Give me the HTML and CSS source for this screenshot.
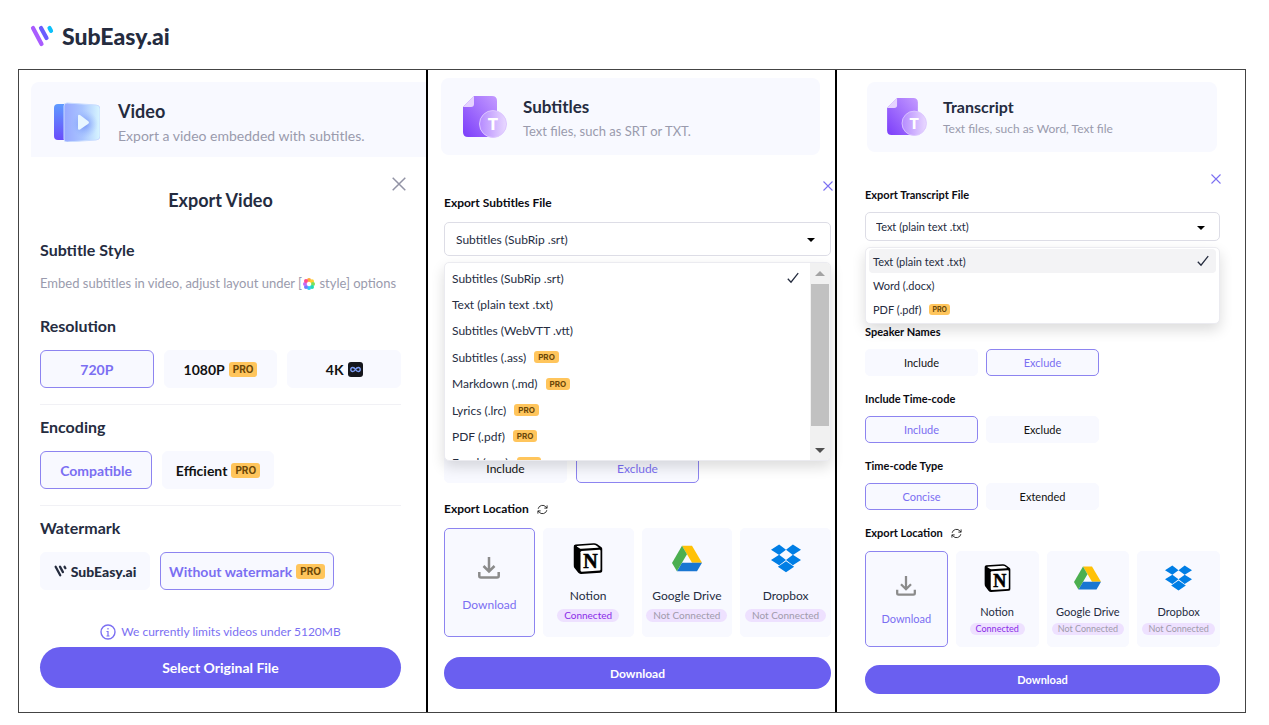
FILE: index.html
```html
<!DOCTYPE html>
<html lang="en">
<head>
    <meta charset="utf-8">
    <title>SubEasy.ai Export</title>
    <link rel="stylesheet" href="styles.css">
</head>
<body>
    <!-- Shared icons -->
    <svg class="sprite" aria-hidden="true">
        <defs>
            <linearGradient id="docFill" x1="1" y1="0" x2="0" y2="1">
                <stop offset="0" stop-color="#c49bff"/>
                <stop offset="1" stop-color="#7b3dfa"/>
            </linearGradient>
            <linearGradient id="discFill" x1="0" y1="0" x2="1" y2="0">
                <stop offset="0" stop-color="#b58aff"/>
                <stop offset="1" stop-color="#e9d9ff"/>
            </linearGradient>
            <linearGradient id="spineFill" x1="0" y1="0" x2="0" y2="1">
                <stop offset="0" stop-color="#5f9bff"/>
                <stop offset="1" stop-color="#6a4cfb"/>
            </linearGradient>
            <linearGradient id="frameFill" x1="0" y1="0" x2="1" y2="0">
                <stop offset="0" stop-color="#98a8ff"/>
                <stop offset="0.5" stop-color="#a9c4ff"/>
                <stop offset="1" stop-color="#d8f6ff"/>
            </linearGradient>
            <radialGradient id="playGlow">
                <stop offset="0" stop-color="#6f8ff5"/>
                <stop offset="1" stop-color="#9fbcff" stop-opacity="0"/>
            </radialGradient>
        </defs>
        <symbol id="close" viewBox="0 0 14 14">
            <path d="M.7 .7L13.3 13.3M13.3 .7L.7 13.3" fill="none" stroke="currentColor" stroke-width="1.5"/>
        </symbol>
        <symbol id="check" viewBox="0 0 12 12">
            <path d="M.8 6.8L4 10.2L11.2 1.2" fill="none" stroke="currentColor" stroke-width="1.3"/>
        </symbol>
        <symbol id="mark" viewBox="0 0 24 22">
            <g fill="none" stroke-width="4.2" stroke-linecap="round">
                <path class="mark-a" d="M3 3L11.5 19"/>
                <path class="mark-b" d="M11 3L16.5 13"/>
                <path class="mark-c" d="M19.5 3L21 5.8"/>
            </g>
        </symbol>
        <symbol id="doc" viewBox="0 0 44 42">
            <path d="M11 0H29Q34 0 34 5V41H5Q0 41 0 36V11Z" fill="url(#docFill)"/>
            <path d="M11 0V8Q11 11 8 11H0Z" fill="#e6d3ff"/>
            <circle cx="30" cy="28" r="13.5" fill="url(#discFill)" stroke="#dcc6ff"/>
        </symbol>
        <symbol id="refresh" viewBox="0 0 24 24">
            <path d="M2.5 10.5A9.7 9.7 0 0 1 19.5 6.5L22 9M22 3V9H16M21.5 13.5A9.7 9.7 0 0 1 4.5 17.5L2 15M2 21V15H8" fill="none" stroke="#222" stroke-width="2"/>
        </symbol>
        <symbol id="tray" viewBox="0 0 22 22">
            <path d="M11 0V14M5.5 9L11 14.5L16.5 9M1.3 15V19Q1.3 20.5 3 20.5H19Q20.7 20.5 20.7 19V15" fill="none" stroke="#8b8b8b" stroke-width="2.5"/>
        </symbol>
        <symbol id="notion" viewBox="0 0 29 31">
            <path d="M2 1.5L20 .2Q22 0 23.5 1L28 4.3Q29 5 29 6.5V27.5Q29 29.5 27 29.7L7.5 30.9Q5.8 31 4.8 29.8L1 25Q0 23.8 0 22V4Q0 1.7 2 1.5Z"/>
            <path d="M3.5 3L20.5 1.8Q21.5 1.8 22.3 2.3L25 4.2Q25.3 4.7 24.5 4.7L8 5.8Q6.8 5.9 6 5.3L3.3 3.5Z" fill="#fff"/>
            <path d="M8.2 7.9L26 6.8Q27 6.8 27 7.9V26.5Q27 27.5 26 27.6L8.2 28.7Q7 28.7 7 27.6V9.2Q7 8 8.2 7.9Z" fill="#fff"/>
        </symbol>
        <symbol id="drive" viewBox="3 6 42 36">
            <path d="M17 6L31 6 45 30 31 30z" fill="#ffc107"/>
            <path d="M9.875 42L16.938 30 45 30 38 42z" fill="#1976d2"/>
            <path d="M3 30.125L9.875 42 24 18 17 6z" fill="#4caf50"/>
        </symbol>
        <symbol id="dropbox" viewBox="0 2 24 22">
            <path d="M6.5 1.8L0 6L6.5 10.2L12 6ZM17.5 1.8L12 6L17.5 10.2L24 6ZM6.5 10L0 14.2L6.5 18.4L12 14.2ZM17.5 10L12 14.2L17.5 18.4L24 14.2ZM5.5 19.6L12 15.2L18.5 19.6L12 24Z" fill="#007ee5"/>
        </symbol>
    </svg>

    <header class="brand">
        <svg class="brand-mark"><use href="#mark"/></svg>
        <span>SubEasy.ai</span>
    </header>

    <main class="panels">
        <!-- Video -->
        <section class="panel panel-video">
            <div class="card">
                <svg class="card-icon" viewBox="0 0 46 40">
                    <rect x="0" y="2" width="14" height="36" rx="4" fill="url(#spineFill)"/>
                    <path d="M13 1L42 3Q46 3 46 7V34Q46 38 42 38L13 40Q10 40 10 37V4Q10 1 13 1Z" fill="url(#frameFill)" stroke="#c9dcff"/>
                    <circle cx="30" cy="22" r="14" fill="url(#playGlow)"/>
                    <path d="M24 14Q24 12 26 13L34 19Q36 20.5 34 22L26 27.5Q24 28.5 24 26.5Z" fill="#e8f6ff"/>
                </svg>
                <div>
                    <h2 class="card-title">Video</h2>
                    <p class="card-text">Export a video embedded with subtitles.</p>
                </div>
            </div>
            <div class="dialog">
                <button class="close" type="button" aria-label="Close"><svg><use href="#close"/></svg></button>
                <h2 class="dialog-title">Export Video</h2>

                <div class="group first">
                    <h3>Subtitle Style</h3>
                    <p class="hint">Embed subtitles in video, adjust layout under [<svg class="flower" viewBox="0 0 12 12">
                        <circle cx="6" cy="2" r="2" fill="#ffa63d"/><circle cx="9" cy="3.2" r="2" fill="#ffd02e"/>
                        <circle cx="10" cy="6" r="2" fill="#7be05c"/><circle cx="9" cy="9" r="2" fill="#23dcb4"/>
                        <circle cx="6" cy="10" r="2" fill="#2fcaf5"/><circle cx="3" cy="9" r="2" fill="#6d7cff"/>
                        <circle cx="2" cy="6" r="2" fill="#c468f2"/><circle cx="3" cy="3" r="2" fill="#ff4b8b"/>
                        <circle cx="6" cy="6" r="1.3" fill="#fff"/>
                    </svg> style] options</p>
                </div>

                <div class="group">
                    <h3>Resolution</h3>
                    <div class="options thirds">
                        <button class="option selected" type="button">720P</button>
                        <button class="option" type="button">1080P <span class="pro">PRO</span></button>
                        <button class="option" type="button">4K <svg class="infinity" viewBox="0 0 15 15">
                            <rect width="15" height="15" rx="3" fill="#15161c"/>
                            <path d="M7.5 7.5C6 5 2.8 4.8 2.8 7.5S6 10 7.5 7.5S12.2 4.8 12.2 7.5S9 10 7.5 7.5" fill="none" stroke="#7d9df5" stroke-width="1.4"/>
                        </svg></button>
                    </div>
                </div>

                <div class="group">
                    <h3>Encoding</h3>
                    <div class="options">
                        <button class="option selected" type="button">Compatible</button>
                        <button class="option" type="button">Efficient <span class="pro">PRO</span></button>
                    </div>
                </div>

                <div class="group last">
                    <h3>Watermark</h3>
                    <div class="options">
                        <button class="option logo-option" type="button"><svg class="mono-mark"><use href="#mark"/></svg>SubEasy.ai</button>
                        <button class="option wide selected" type="button">Without watermark <span class="pro">PRO</span></button>
                    </div>
                </div>

                <p class="limit">
                    <svg viewBox="0 0 16 16"><circle cx="8" cy="8" r="7" fill="none" stroke="currentColor" stroke-width="1.4"/><path d="M8 7V12M6.5 7.5H8M6.5 12H9.5M8 4V5.5" fill="none" stroke="currentColor" stroke-width="1.2"/></svg>
                    We currently limits videos under 5120MB
                </p>
                <button class="submit" type="button">Select Original File</button>
            </div>
        </section>

        <!-- Subtitles -->
        <section class="panel panel-subtitles">
            <div class="card">
                <svg class="card-icon" viewBox="0 0 44 42"><use href="#doc" width="44" height="42"/><text x="30" y="34">T</text></svg>
                <div>
                    <h2 class="card-title">Subtitles</h2>
                    <p class="card-text">Text files, such as SRT or TXT.</p>
                </div>
            </div>
            <div class="dialog">
                <button class="close" type="button" aria-label="Close"><svg><use href="#close"/></svg></button>
                <h3><label for="subtitleFormat">Export Subtitles File</label></h3>
                <div class="picker">
                    <select id="subtitleFormat">
                        <option>Subtitles (SubRip .srt)</option>
                    </select>
                    <div class="menu">
                        <ul>
                            <li>Subtitles (SubRip .srt)<svg class="check"><use href="#check"/></svg></li>
                            <li>Text (plain text .txt)</li>
                            <li>Subtitles (WebVTT .vtt)</li>
                            <li>Subtitles (.ass) <span class="pro">PRO</span></li>
                            <li>Markdown (.md) <span class="pro">PRO</span></li>
                            <li>Lyrics (.lrc) <span class="pro">PRO</span></li>
                            <li>PDF (.pdf) <span class="pro">PRO</span></li>
                            <li>Excel (.csv) <span class="pro">PRO</span></li>
                        </ul>
                        <div class="scrollbar">
                            <svg viewBox="0 0 10 5"><path d="M0 5L5 0L10 5Z" fill="#a3a3a3"/></svg>
                            <div class="thumb"></div>
                            <svg viewBox="0 0 10 5"><path d="M0 0L5 5L10 0Z" fill="#505050"/></svg>
                        </div>
                    </div>
                </div>
                <div class="options under-menu">
                    <button class="option" type="button">Include</button>
                    <button class="option selected" type="button">Exclude</button>
                </div>

                <h3>Export Location <svg class="refresh"><use href="#refresh"/></svg></h3>
                <div class="tiles">
                    <button class="tile selected" type="button"><svg class="tray"><use href="#tray"/></svg>Download</button>
                    <button class="tile" type="button"><svg class="app notion" viewBox="0 0 29 31"><use href="#notion" width="29" height="31"/><text x="17" y="25">N</text></svg>Notion<span class="status on">Connected</span></button>
                    <button class="tile" type="button"><svg class="app"><use href="#drive"/></svg>Google Drive<span class="status">Not Connected</span></button>
                    <button class="tile" type="button"><svg class="app"><use href="#dropbox"/></svg>Dropbox<span class="status">Not Connected</span></button>
                </div>
                <button class="submit" type="button">Download</button>
            </div>
        </section>

        <!-- Transcript -->
        <section class="panel panel-transcript">
            <div class="card">
                <svg class="card-icon" viewBox="0 0 44 42"><use href="#doc" width="44" height="42"/><text x="30" y="34">T</text></svg>
                <div>
                    <h2 class="card-title">Transcript</h2>
                    <p class="card-text">Text files, such as Word, Text file</p>
                </div>
            </div>
            <div class="dialog">
                <button class="close" type="button" aria-label="Close"><svg><use href="#close"/></svg></button>
                <h3><label for="transcriptFormat">Export Transcript File</label></h3>
                <div class="picker">
                    <select id="transcriptFormat">
                        <option>Text (plain text .txt)</option>
                    </select>
                    <div class="menu">
                        <ul>
                            <li class="current">Text (plain text .txt)<svg class="check"><use href="#check"/></svg></li>
                            <li>Word (.docx)</li>
                            <li>PDF (.pdf) <span class="pro">PRO</span></li>
                        </ul>
                    </div>
                </div>

                <h3 class="under-menu">Speaker Names</h3>
                <div class="options">
                    <button class="option" type="button">Include</button>
                    <button class="option selected" type="button">Exclude</button>
                </div>
                <h3>Include Time-code</h3>
                <div class="options">
                    <button class="option selected" type="button">Include</button>
                    <button class="option" type="button">Exclude</button>
                </div>
                <h3>Time-code Type</h3>
                <div class="options">
                    <button class="option selected" type="button">Concise</button>
                    <button class="option" type="button">Extended</button>
                </div>

                <h3>Export Location <svg class="refresh"><use href="#refresh"/></svg></h3>
                <div class="tiles">
                    <button class="tile selected" type="button"><svg class="tray"><use href="#tray"/></svg>Download</button>
                    <button class="tile" type="button"><svg class="app notion" viewBox="0 0 29 31"><use href="#notion" width="29" height="31"/><text x="17" y="25">N</text></svg>Notion<span class="status on">Connected</span></button>
                    <button class="tile" type="button"><svg class="app"><use href="#drive"/></svg>Google Drive<span class="status">Not Connected</span></button>
                    <button class="tile" type="button"><svg class="app"><use href="#dropbox"/></svg>Dropbox<span class="status">Not Connected</span></button>
                </div>
                <button class="submit" type="button">Download</button>
            </div>
        </section>
    </main>
</body>
</html>
```
FILE: styles.css
```css
:root {
    --accent: #6a5ff0;
    --accent-text: #7b6ff2;
    --accent-line: #8d84f0;
    --ink: #252c3f;
    --muted: #9a9bad;
    --soft: #f8f9ff;
}

* { box-sizing: border-box; }

body {
    margin: 0;
    background: #fff;
    color: var(--ink);
    font-family: Lato, sans-serif;
    font-size: 12px;
}

h2, h3, p, ul { margin: 0; padding: 0; }
ul { list-style: none; }
button, select { font: inherit; color: inherit; margin: 0; padding: 0; border: none; background: none; cursor: pointer; }
svg { flex: none; }
.sprite { position: absolute; width: 0; height: 0; }

/* Header */
.brand {
    display: flex;
    align-items: center;
    gap: 8px;
    height: 69px;
    padding: 3px 30px 0;
    font-size: 23px;
    font-weight: 900;
}
.brand-mark { width: 24px; height: 22px; }
.mark-a { stroke: var(--mark-a, #a95cff); }
.mark-b { stroke: var(--mark-b, #6a5bff); }
.mark-c { stroke: var(--mark-c, #0cc0fa); }

/* Panels */
.panels {
    display: grid;
    grid-template-columns: 407fr 409fr 410fr;
    margin: 0 23px 11px 18px;
    border: 1px solid #444;
}
.panel { min-width: 0; padding-top: 12px; }
.panel + .panel { border-left: 2px solid #000; }
.panel-subtitles { padding-top: 8px; }

.card {
    display: flex;
    background: var(--soft);
    border-radius: 8px;
}
.card-title { font-weight: 700; }
.card-text { color: var(--muted); }
.card-icon text { fill: #fff; font: 800 16px Inter, sans-serif; text-anchor: middle; }

.panel-video .card { height: 75px; margin-left: 12px; padding: 16px 0 0 23px; gap: 18px; border-radius: 8px 0 0 0; }
.panel-video .card-icon { width: 46px; height: 40px; margin-top: 4px; }
.panel-video .card-title { font-size: 18px; line-height: 26px; }
.panel-video .card-text { font-size: 14px; line-height: 24px; }

.panel-subtitles .card { height: 77px; margin: 0 15px 0 13px; padding: 17px 0 0 22px; gap: 16px; }
.panel-subtitles .card-icon { width: 44px; height: 42px; margin-top: 1px; }
.panel-subtitles .card-title { font-size: 17px; line-height: 24px; }
.panel-subtitles .card-text { font-size: 13px; line-height: 24px; }

.panel-transcript .card { height: 70px; margin: 0 28px 0 30px; padding: 14px 0 0 20px; gap: 16px; }
.panel-transcript .card-icon { width: 40px; height: 38px; margin-top: 2px; }
.panel-transcript .card-title { font-size: 16px; line-height: 22px; }
.panel-transcript .card-text { font-size: 12px; line-height: 22px; }

/* Dialogs */
.dialog { position: relative; }
.close { position: absolute; display: flex; color: var(--accent-text); }
.close svg { width: 10px; height: 10px; }
h3 { display: flex; align-items: center; gap: 8px; color: #0b0b12; font-weight: 700; }

.option {
    display: flex;
    align-items: center;
    justify-content: center;
    gap: 4px;
    border: 1px solid var(--soft);
    border-radius: 5px;
    background: var(--soft);
    color: #111;
}
.options { display: flex; }
.option.selected, .tile.selected { border-color: var(--accent-line); color: var(--accent-text); }

.pro {
    padding: 0 4px;
    border-radius: 3px;
    background: #ffc55c;
    color: #6b4708;
    font-family: Inter, sans-serif;
    font-size: 8px;
    font-weight: 700;
    line-height: 12px;
}

.submit {
    display: block;
    width: 100%;
    height: 32px;
    border-radius: 21px;
    background: var(--accent);
    color: #fff;
    font-weight: 700;
}

/* Video dialog */
.panel-video .dialog { padding: 31px 25px 24px 21px; }
.panel-video .close { top: 20px; right: 20px; color: #9293a5; }
.panel-video .close svg { width: 14px; height: 14px; }
.dialog-title { font-size: 18px; font-weight: 700; line-height: 24px; text-align: center; }
.panel-video h3 { color: var(--ink); font-size: 16px; line-height: 24px; }
.group { padding: 10px 0 16px; border-bottom: 1px solid #f1f1f5; }
.group.first { padding: 26px 0 11px; border: none; }
.group.last { padding-bottom: 0; border: none; }
.hint { margin-top: 11px; color: var(--muted); font-size: 13px; line-height: 20px; white-space: nowrap; }
.flower { width: 12px; height: 12px; margin: 0 1px; vertical-align: -2px; }
.panel-video .options { gap: 10px; margin-top: 12px; }
.panel-video .option { height: 38px; width: 112px; border-radius: 6px; font-size: 14px; font-weight: 700; }
.panel-video .thirds .option { flex: 1; }
.panel-video .option.wide { width: 174px; }
.panel-video .pro { font-size: 10px; line-height: 15px; }
.infinity { width: 15px; height: 15px; }
.panel-video .logo-option { width: 110px; color: var(--ink); font-weight: 900; }
.mono-mark { width: 13px; height: 12px; --mark-a: #252c3f; --mark-b: #252c3f; --mark-c: #252c3f; }
.limit {
    display: flex;
    align-items: center;
    justify-content: center;
    gap: 5px;
    margin: 32px 0 5px;
    color: var(--accent-text);
    font-size: 12px;
    line-height: 20px;
}
.limit svg { width: 16px; height: 16px; }
.panel-video .submit { height: 41px; font-size: 14px; }

/* Format picker */
.picker { position: relative; }
.picker::after {
    content: "";
    position: absolute;
    top: 50%;
    right: 16px;
    margin-top: -1px;
    border: 4px solid transparent;
    border-top-color: #000;
    border-bottom: none;
}
.picker select {
    display: block;
    width: 100%;
    padding: 0 11px;
    border: 1px solid #dddde6;
    border-radius: 5px;
    background: #fff;
    appearance: none;
}
.menu {
    position: absolute;
    z-index: 1;
    top: calc(100% + 6px);
    left: 0;
    right: 0;
    display: flex;
    overflow: hidden;
    border: 1px solid #ebebf0;
    border-radius: 5px;
    background: #fff;
    box-shadow: 0 6px 14px rgba(0, 0, 0, 0.14);
}
.menu ul { flex: 1; }
.menu li { display: flex; align-items: center; gap: 8px; }
.check { width: 12px; height: 12px; margin-left: auto; }
.scrollbar {
    display: flex;
    flex-direction: column;
    align-items: center;
    width: 20px;
    padding: 8px 1px 7px;
    background: #f1f1f1;
}
.scrollbar svg { width: 10px; height: 5px; }
.thumb { width: 18px; height: 142px; margin: 8px 0 auto; background: #c1c1c1; }

/* Export location tiles */
.tiles { display: grid; grid-template-columns: repeat(4, 1fr); gap: 8px; }
.tile {
    display: flex;
    flex-direction: column;
    align-items: center;
    min-width: 0;
    border: 1px solid var(--soft);
    border-radius: 5px;
    background: var(--soft);
    white-space: nowrap;
}
.notion text { font: 700 20px "Liberation Serif", serif; text-anchor: middle; stroke: #000; stroke-width: 0.6; }
.refresh { width: 11px; height: 11px; }
.status { border-radius: 7px; background: #eee1ff; color: #a09bab; }
.status.on { color: #8a2be8; }

/* Subtitles dialog */
.panel-subtitles .dialog { padding: 36px 4px 0 16px; }
.panel-subtitles .close { top: 26px; right: 2px; }
.panel-subtitles h3 { font-size: 12px; line-height: 24px; }
.panel-subtitles .picker { margin-top: 7px; }
.panel-subtitles select { height: 34px; }
.panel-subtitles .menu { height: 199px; }
.panel-subtitles .menu ul { display: grid; grid-auto-rows: 1fr; height: 213px; padding: 2px 11px 0 7px; }
.panel-subtitles .options { gap: 9px; margin-bottom: 14px; }
.panel-subtitles .under-menu { margin-top: 197px; }
.panel-subtitles .option { width: 123px; height: 30px; }
.panel-subtitles .tiles { margin: 7px 0 20px; }
.panel-subtitles .tile { height: 109px; padding-top: 14px; line-height: 20px; }
.panel-subtitles .tile .app { width: 30px; height: 31px; margin-bottom: 12px; }
.panel-subtitles .tray { width: 22px; height: 22px; margin: 14px 0 16px; }
.panel-subtitles .status { padding: 0 7px; margin-top: 3px; font-size: 10px; line-height: 13px; }

/* Transcript dialog */
.panel-transcript .dialog { padding: 33px 25px 0 28px; font-size: 11px; }
.panel-transcript .close { top: 22px; right: 24px; }
.panel-transcript h3 { margin-top: 13px; font-size: 11px; line-height: 20px; }
.panel-transcript h3:first-of-type { margin-top: 0; }
.panel-transcript .picker { margin-top: 7px; }
.panel-transcript .picker::after { right: 15px; }
.panel-transcript select { height: 29px; padding: 0 10px; }
.panel-transcript .menu { height: 77px; }
.panel-transcript .menu ul { padding: 1px 3px; }
.panel-transcript .menu li { height: 24px; padding: 0 7px 0 4px; border-radius: 4px; }
.panel-transcript .menu .current { background: #f3f3f5; }
.panel-transcript .under-menu { margin-top: 81px; }
.panel-transcript .options { gap: 8px; margin-top: 7px; }
.panel-transcript .option { width: 113px; height: 27px; }
.panel-transcript .pro { padding: 0 3px; font-size: 7px; line-height: 11px; }
.panel-transcript .tiles { margin: 8px 0 18px; }
.panel-transcript .tile { height: 96px; padding-top: 12px; line-height: 18px; }
.panel-transcript .app { width: 27px; height: 28px; margin-bottom: 11px; }
.panel-transcript .tray { width: 20px; height: 20px; margin: 12px 0 14px; }
.panel-transcript .status { padding: 0 6px; margin-top: 2px; font-size: 9px; line-height: 12px; }
.panel-transcript .submit { height: 29px; }
```
